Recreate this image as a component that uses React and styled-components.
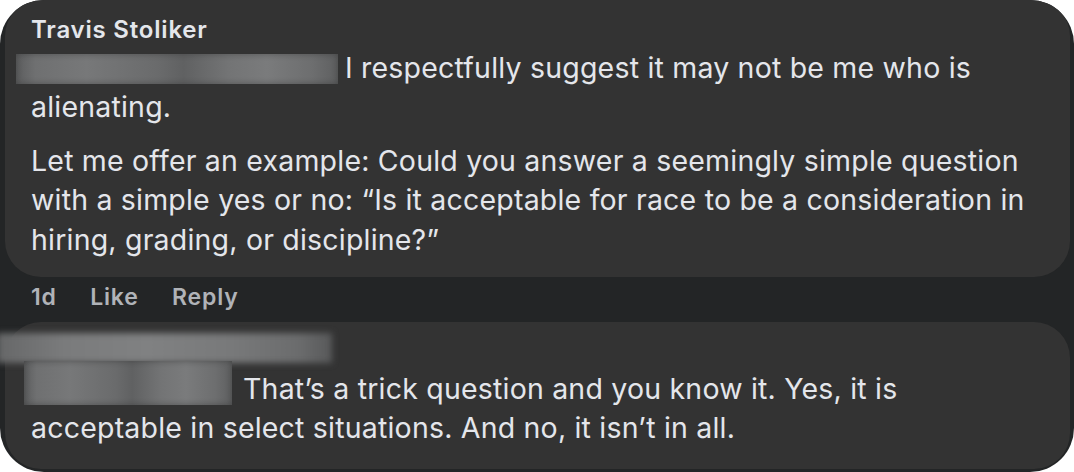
import React from "react";
import styled, { createGlobalStyle } from "styled-components";

const Global = createGlobalStyle`
  html, body { margin: 0; padding: 0; background: #ffffff; }
  body { font-family: Inter, "Noto Sans", "Liberation Sans", sans-serif; }
`;

const Frame = styled.div`
  width: 1074px;
  height: 472px;
  box-sizing: border-box;
  border-radius: 44px;
  overflow: hidden;
  background: #232526;
  padding: 0 4px 0 5px;
  display: flex;
  flex-direction: column;
`;

const Bubble = styled.div`
  background: #333333;
  border-radius: 36px;
  padding: ${(p) => p.$pad};
  color: #e4e6eb;
`;

const Name = styled.div`
  font-size: 24px;
  line-height: 30px;
  font-weight: 600;
  letter-spacing: 0.8px;
  color: #e4e6eb;
  margin-bottom: 2.7px;
`;

const Para = styled.p`
  margin: 0;
  font-size: 28.5px;
  line-height: 39.6px;
  font-weight: 400;
  letter-spacing: 0.2px;
  & + & { margin-top: 14px; }
`;

const Redact = styled.span`
  display: inline-block;
  position: relative;
  width: ${(p) => p.$w}px;
  height: 30px;
  vertical-align: -6.5px;
  margin-left: ${(p) => p.$ml}px;
  margin-right: ${(p) => p.$mr}px;
  &::before {
    content: "";
    position: absolute;
    left: 0;
    right: 0;
    top: ${(p) => p.$top}px;
    bottom: 0;
    background: linear-gradient(
      90deg,
      #5c5d5e 0%,
      #6f7071 6%,
      #777879 22%,
      #6a6b6c 44%,
      #606162 52%,
      #737475 66%,
      #7a7b7c 78%,
      #6d6e6f 92%,
      #5e5f60 100%
    );
    box-shadow: inset 0 0 6px rgba(40, 40, 40, 0.45);
  }
`;

const NameBlur = styled.div`
  width: 335px;
  height: 30px;
  margin: 11px 0 6px -34px;
  background: linear-gradient(
    90deg,
    #666768 0%,
    #7a7b7c 20%,
    #808182 45%,
    #78797a 70%,
    #6b6c6d 90%,
    #58595a 100%
  );
  filter: blur(3px);
`;

const Actions = styled.div`
  display: flex;
  gap: 33.5px;
  padding-left: 26px;
  margin: 6px 0 11px;
  font-size: 23px;
  line-height: 28px;
  font-weight: 600;
  letter-spacing: 0.8px;
  color: #b0b3b8;
`;

export default function App() {
  return (
    <>
      <Global />
      <Frame>
        <Bubble $pad="15px 26px 17px 26px">
          <Name>Travis Stoliker</Name>
          <Para>
            <Redact $w={322} $ml={-15} $mr={7} $top={0} />
            I respectfully suggest it may not be me who is alienating.
          </Para>
          <Para>
            Let me offer an example: Could you answer a seemingly simple question
            with a simple yes or no: “Is it acceptable for race to be a consideration
            in hiring, grading, or discipline?”
          </Para>
        </Bubble>
        <Actions>
          <span>1d</span>
          <span>Like</span>
          <span>Reply</span>
        </Actions>
        <Bubble $pad="0 26px 21px 26px">
          <NameBlur />
          <Para>
            <Redact $w={208} $ml={-7} $mr={11} $top={-14} />
            That’s a trick question and you know it. Yes, it is acceptable in
            select situations. And no, it isn’t in all.
          </Para>
        </Bubble>
      </Frame>
    </>
  );
}
